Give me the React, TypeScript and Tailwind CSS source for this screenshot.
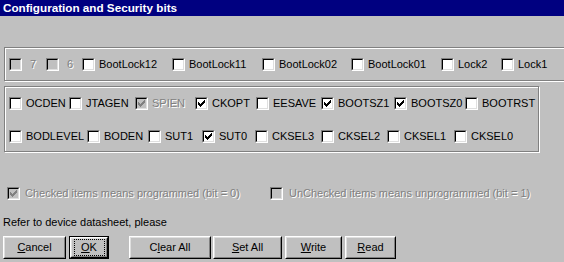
import React from "react";

const Mark = ({ color }: { color: string }) => (
  <svg width="7" height="7" viewBox="0 0 7 7" shapeRendering="crispEdges" fill={color}>
    <path d="M6 0h1v1h-1z M5 1h2v1h-2z M0 2h1v1h-1z M4 2h3v1h-3z M0 3h2v1h-2z M3 3h3v1h-3z M0 4h5v1h-5z M1 5h3v1h-3z M2 6h1v1h-1z" />
  </svg>
);

const Check = ({ checked, disabled }: { checked?: boolean; disabled?: boolean }) => (
  <div className="w-[13px] h-[13px] shrink-0 border border-t-[#808080] border-l-[#808080] border-b-white border-r-white">
    <div
      className={
        "w-full h-full border border-t-black border-l-black border-b-[#dfdfdf] border-r-[#dfdfdf] flex items-center justify-center " +
        (disabled ? "bg-[#c0c0c0]" : "bg-white")
      }
    >
      {checked && <Mark color={disabled ? "#808080" : "#000000"} />}
    </div>
  </div>
);

const dis = "text-[#808080] [text-shadow:1px_1px_0_#ffffff]";

const Item = ({
  label,
  w,
  checked,
  disabled,
  gapCls = "ml-[4px]",
  textDisabled,
}: {
  label: string;
  w: string;
  checked?: boolean;
  disabled?: boolean;
  gapCls?: string;
  textDisabled?: boolean;
}) => (
  <div className={"flex items-center shrink-0 h-[13px] " + w}>
    <Check checked={checked} disabled={disabled} />
    <span className={"whitespace-nowrap leading-[13px] " + gapCls + " " + (textDisabled || disabled ? dis : "")}>{label}</span>
  </div>
);

const Btn = ({ children, w, def }: { children: React.ReactNode; w: string; def?: boolean }) => {
  const inner = (
    <div className="w-full h-full border border-t-white border-l-white border-b-black border-r-black">
      <div className="w-full h-full border border-t-[#dfdfdf] border-l-[#dfdfdf] border-b-[#808080] border-r-[#808080] flex items-center justify-center">
        {def ? (
          <div className="w-[31px] h-[17px] border border-dotted border-black flex items-center justify-center leading-[13px]">
            {children}
          </div>
        ) : (
          <span className="leading-[13px]">{children}</span>
        )}
      </div>
    </div>
  );
  return (
    <div className={"h-[23px] shrink-0 " + w + (def ? " border border-black" : "")}>{inner}</div>
  );
};

export default function App() {
  return (
    <div className="w-[564px] h-[262px] bg-[#c0c0c0] overflow-hidden font-['Liberation_Sans',Arial,sans-serif] text-[11px] text-black">
      <div className="h-[16px] bg-[#000080] text-white font-bold text-[11.7px] leading-[15px] pl-[3px] whitespace-nowrap">
        Configuration and Security bits
      </div>

      <div className="pl-[4px] pt-[31px]">
        {/* group 1 */}
        <div className="w-[620px] h-[34px] border border-[#808080] shadow-[1px_1px_0_#ffffff,inset_1px_1px_0_#ffffff] flex items-center pl-[4px]">
          <Item label="7" w="w-[37px]" disabled gapCls="ml-[8px]" />
          <Item label="6" w="w-[36px]" disabled gapCls="ml-[8px]" />
          <Item label="BootLock12" w="w-[90px]" />
          <Item label="BootLock11" w="w-[90px]" />
          <Item label="BootLock02" w="w-[89px]" />
          <Item label="BootLock01" w="w-[90px]" />
          <Item label="Lock2" w="w-[60px]" />
          <Item label="Lock1" w="w-[60px]" />
        </div>

        {/* group 2 */}
        <div className="mt-[5px] w-[535px] h-[66px] border border-[#808080] shadow-[1px_1px_0_#ffffff,inset_1px_1px_0_#ffffff] flex flex-col pl-[4px] pt-[10px] gap-[20px]">
          <div className="flex items-center">
            <Item label="OCDEN" w="w-[60px]" />
            <Item label="JTAGEN" w="w-[66px]" />
            <Item label="SPIEN" w="w-[60px]" checked disabled />
            <Item label="CKOPT" w="w-[61px]" checked />
            <Item label="EESAVE" w="w-[65px]" />
            <Item label="BOOTSZ1" w="w-[73px]" checked />
            <Item label="BOOTSZ0" w="w-[71px]" checked />
            <Item label="BOOTRST" w="w-[66px]" />
          </div>
          <div className="flex items-center">
            <Item label="BODLEVEL" w="w-[78px]" />
            <Item label="BODEN" w="w-[61px]" />
            <Item label="SUT1" w="w-[54px]" />
            <Item label="SUT0" w="w-[53px]" checked />
            <Item label="CKSEL3" w="w-[66px]" />
            <Item label="CKSEL2" w="w-[66px]" />
            <Item label="CKSEL1" w="w-[67px]" />
            <Item label="CKSEL0" w="w-[60px]" />
          </div>
        </div>
      </div>

      {/* legend */}
      <div className="mt-[35px] flex items-center pl-[7px]">
        <Item label="Checked items means programmed (bit = 0)" w="w-[263px]" checked disabled gapCls="ml-[5px]" />
        <Item label="UnChecked items means unprogrammed (bit = 1)" w="w-[280px]" disabled gapCls="ml-[6px]" />
      </div>

      <div className="mt-[16px] pl-[3px] leading-[13px] whitespace-nowrap">Refer to device datasheet, please</div>

      <div className="mt-[7px] flex pl-[3px]">
        <Btn w="w-[63px]">
          <span><u>C</u>ancel</span>
        </Btn>
        <div className="ml-[3px]">
          <Btn w="w-[40px]" def>
            <span><u>O</u>K</span>
          </Btn>
        </div>
        <div className="ml-[20px]">
          <Btn w="w-[82px]">
            <span>C<u>l</u>ear All</span>
          </Btn>
        </div>
        <div className="ml-[2px]">
          <Btn w="w-[69px]">
            <span><u>S</u>et All</span>
          </Btn>
        </div>
        <div className="ml-[3px]">
          <Btn w="w-[57px]">
            <span><u>W</u>rite</span>
          </Btn>
        </div>
        <div className="ml-[3px]">
          <Btn w="w-[51px]">
            <span><u>R</u>ead</span>
          </Btn>
        </div>
      </div>
    </div>
  );
}
